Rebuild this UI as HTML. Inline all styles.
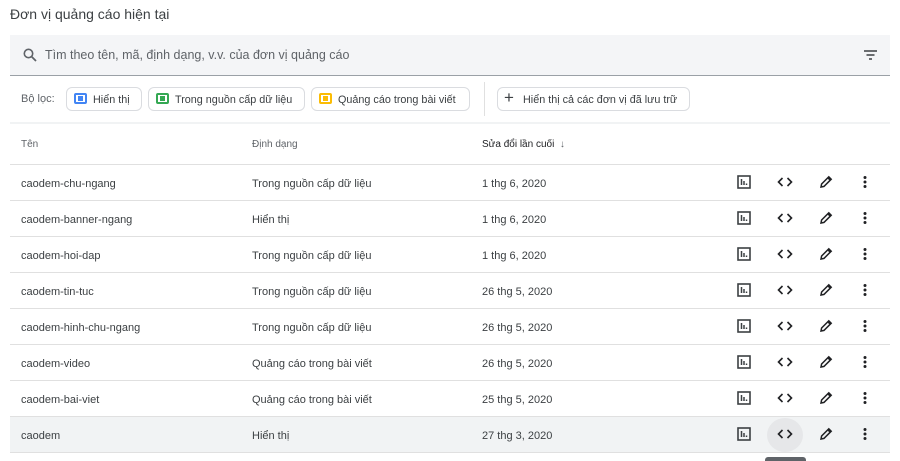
<!DOCTYPE html>
<html><head><meta charset="utf-8"><style>
*{box-sizing:border-box;margin:0;padding:0}
body{width:900px;height:461px;overflow:hidden;background:#fff;font-family:"Liberation Sans",sans-serif;color:#202124;position:relative}
.a{position:absolute}
.title{left:10px;top:6px;font-size:14px;color:#3c4043}
.search{left:10px;top:35px;width:880px;height:41px;background:#f4f5f7;border-bottom:1px solid #9aa0a6}
.search span{position:absolute;left:35px;top:13px;font-size:12.5px;color:#5f6368}
.chip{top:87px;height:24px;border:1px solid #dadce0;border-radius:6px;font-size:10.8px;color:#3c4043;padding:6px 8px 0 26px;white-space:nowrap}
.chip i{position:absolute;left:7px;top:5px;width:13px;height:11px;border:2px solid;border-radius:2px}
.chip i b{position:absolute;left:2px;top:1px;width:5px;height:5px}
.hdr{font-size:10px;color:#5f6368;top:139px}
.row{left:10px;width:880px;height:36px;border-top:1px solid #e0e0e0;font-size:11px;color:#3c4043}
.row div{position:absolute;top:13px}
.row svg{position:absolute;top:10px}
</style></head><body>
<div class="a title">Đơn vị quảng cáo hiện tại</div>
<div class="a search">
<svg class="a" style="left:13px;top:13px" width="14" height="14" viewBox="0 0 14 14"><circle cx="5.5" cy="5.5" r="4.2" fill="none" stroke="#5f6368" stroke-width="1.6"/><path d="M8.5 8.5L13 13" stroke="#5f6368" stroke-width="1.8"/></svg>
<span>Tìm theo tên, mã, định dạng, v.v. của đơn vị quảng cáo</span>
<svg class="a" style="left:854px;top:15px" width="13" height="10"><path d="M0 1h13M2.5 5h8M5 9h3" stroke="#3c4043" stroke-width="1.6"/></svg>
</div>
<div class="a" style="left:21px;top:93px;font-size:11px;color:#5f6368">Bộ lọc:</div>
<div class="a chip" style="left:66px;width:76px"><i style="border-color:#4285f4"><b style="background:#4285f4"></b></i>Hiển thị</div>
<div class="a chip" style="left:148px;width:157px"><i style="border-color:#34a853"><b style="background:#34a853"></b></i>Trong nguồn cấp dữ liệu</div>
<div class="a chip" style="left:311px;width:159px"><i style="border-color:#fbbc04"><b style="background:#fbbc04"></b></i>Quảng cáo trong bài viết</div>
<div class="a" style="left:484px;top:82px;width:1px;height:34px;background:#e0e0e0"></div>
<div class="a chip" style="left:497px;width:193px;padding-left:25px"><span style="position:absolute;left:6px;top:0px;font-size:17px;color:#3c4043">+</span>Hiển thị cả các đơn vị đã lưu trữ</div>
<div class="a" style="left:10px;top:122px;width:880px;height:2px;background:#f1f3f4"></div>
<div class="a hdr" style="left:21px">Tên</div>
<div class="a hdr" style="left:252px">Định dạng</div>
<div class="a hdr" style="left:482px;color:#202124">Sửa đổi lần cuối &nbsp;<span style="color:#5f6368">↓</span></div>
<div id="rows"></div>
<div class="a" style="left:10px;top:452px;width:880px;height:1px;background:#e0e0e0"></div>
<div class="a" style="left:765px;top:457px;width:41px;height:4px;background:#5f6368;border-radius:3px 3px 0 0"></div>
<script>
var d=[["caodem-chu-ngang","Trong nguồn cấp dữ liệu","1 thg 6, 2020"],["caodem-banner-ngang","Hiển thị","1 thg 6, 2020"],["caodem-hoi-dap","Trong nguồn cấp dữ liệu","1 thg 6, 2020"],["caodem-tin-tuc","Trong nguồn cấp dữ liệu","26 thg 5, 2020"],["caodem-hinh-chu-ngang","Trong nguồn cấp dữ liệu","26 thg 5, 2020"],["caodem-video","Quảng cáo trong bài viết","26 thg 5, 2020"],["caodem-bai-viet","Quảng cáo trong bài viết","25 thg 5, 2020"],["caodem","Hiển thị","27 thg 3, 2020"]];
var h="";d.forEach(function(r,i){var last=i==7;
h+='<div class="a row" style="top:'+(164+i*36)+'px;'+(last?'background:#f1f3f4':'')+'">'+
'<div style="left:11px">'+r[0]+'</div><div style="left:242px">'+r[1]+'</div><div style="left:472px">'+r[2]+'</div>'+
(last?'<span style="position:absolute;left:757px;top:1px;width:36px;height:34px;border-radius:50%;background:#e6e7e9"></span>':'')+
'<svg style="left:727px" width="14" height="14"><rect x="1" y="1" width="12" height="12" fill="none" stroke="#3c4043" stroke-width="1.6"/><path d="M4.5 4v6M7 6v4M9.5 8.5v1.5" stroke="#3c4043" stroke-width="1.5"/></svg>'+
'<svg style="left:767px" width="16" height="14"><path d="M5.5 3L1.5 7l4 4M10.5 3l4 4-4 4" fill="none" stroke="#202124" stroke-width="1.6"/></svg>'+
'<svg style="left:809px" width="14" height="14"><path d="M2 12l.6-3L9.8 1.8l2.4 2.4L5 11.4z" fill="none" stroke="#202124" stroke-width="1.5"/><path d="M9 2.6l2.4 2.4" stroke="#202124" stroke-width="2"/></svg>'+
'<svg style="left:853px" width="4" height="14"><circle cx="2" cy="2.5" r="1.5" fill="#202124"/><circle cx="2" cy="7" r="1.5" fill="#202124"/><circle cx="2" cy="11.5" r="1.5" fill="#202124"/></svg>'+
'</div>';});
document.getElementById("rows").innerHTML=h;
</script>
</body></html>
